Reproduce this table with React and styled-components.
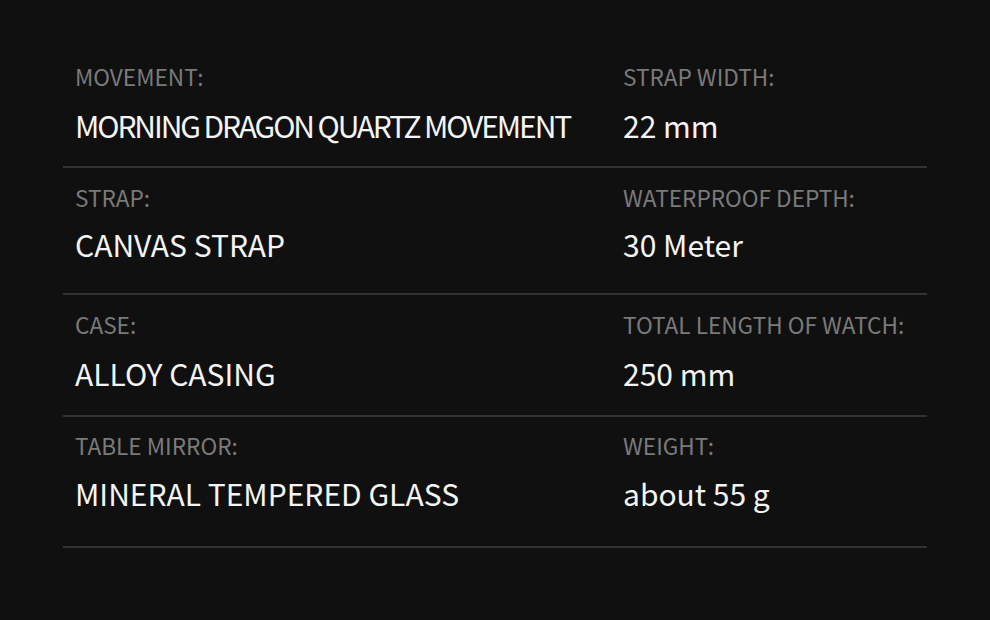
import React from "react";
import styled, { createGlobalStyle } from "styled-components";

const Global = createGlobalStyle`
    body {
        margin: 0;
        background: #101010;
        font-family: "Noto Sans CJK SC", "Noto Sans", sans-serif;
    }
`;

const Page = styled.div`
    width: 990px;
    height: 620px;
    background: #101010;
    padding: 47px 63px 0;
    box-sizing: border-box;
`;

const Table = styled.div`
    display: flex;
    flex-direction: column;
`;

const Row = styled.div`
    display: grid;
    grid-template-columns: 548px 316px;
    height: ${(p) => p.h}px;
    border-bottom: 2px solid #333;
    box-sizing: border-box;
`;

const Cell = styled.div`
    display: flex;
    flex-direction: column;
    padding: ${(p) => p.top || 15}px 12px 0;
`;

const Label = styled.div`
    color: #7a7a7a;
    font-size: 22.6px;
    line-height: 28px;
    white-space: nowrap;
`;

const Value = styled.div`
    color: #f4f4f4;
    font-size: 30px;
    line-height: 36px;
    margin-top: ${(p) => p.gap || 15}px;
    letter-spacing: ${(p) => p.tight ? "-2.1px" : "0"};
    white-space: nowrap;
`;

const rows = [
    { h: 121, top: 16, gap: 16, items: [["MOVEMENT:", "MORNING DRAGON QUARTZ MOVEMENT", true], ["STRAP WIDTH:", "22 mm"]] },
    { h: 127, top: 16, gap: 14, items: [["STRAP:", "CANVAS STRAP"], ["WATERPROOF DEPTH:", "30 Meter"]] },
    { h: 122, top: 16, gap: 16, items: [["CASE:", "ALLOY CASING"], ["TOTAL LENGTH OF WATCH:", "250 mm"]] },
    { h: 131, top: 15, gap: 15, items: [["TABLE MIRROR:", "MINERAL TEMPERED GLASS"], ["WEIGHT:", "about 55 g"]] },
];

const App = () => {
    return (
        <Page>
            <Global />
            <Table>
                {rows.map((r, i) => (
                    <Row key={i} h={r.h}>
                        {r.items.map(([label, value, tight], j) => (
                            <Cell key={j} top={r.top}>
                                <Label>{label}</Label>
                                <Value gap={r.gap} tight={tight}>{value}</Value>
                            </Cell>
                        ))}
                    </Row>
                ))}
            </Table>
        </Page>
    );
};

export default App;
